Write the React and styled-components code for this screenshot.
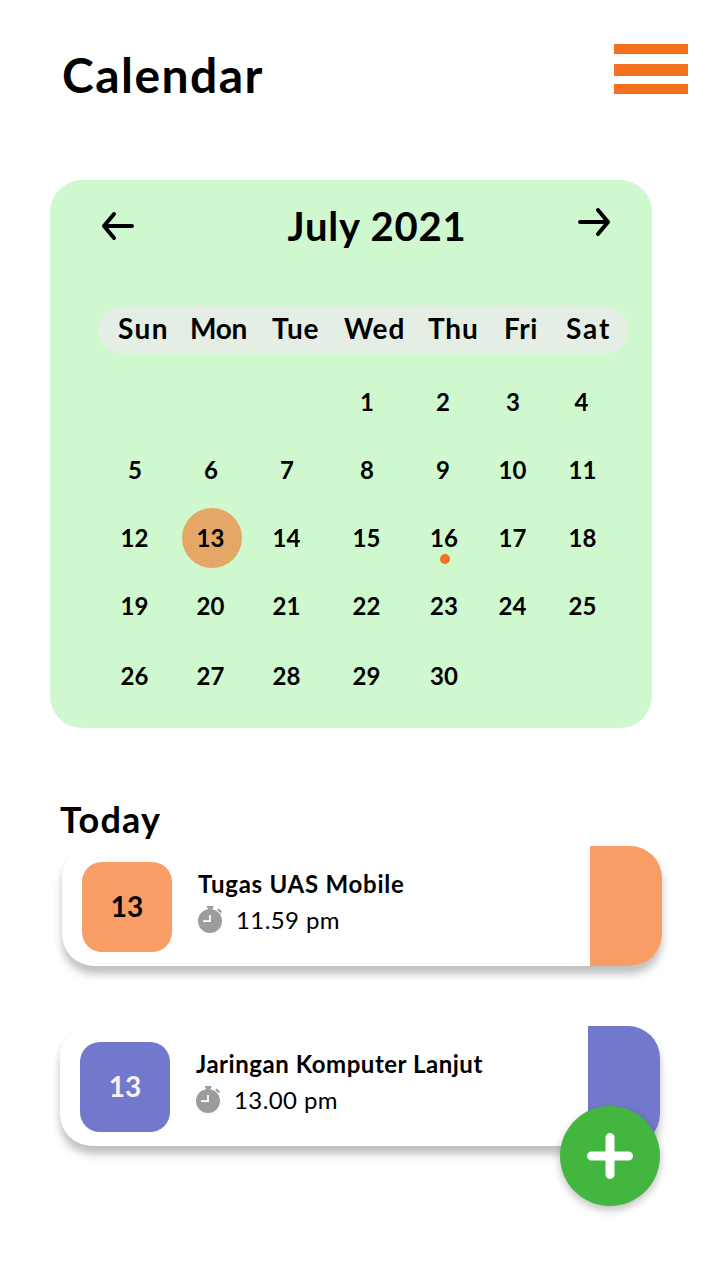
import React from "react";
import styled, { createGlobalStyle } from "styled-components";

const GlobalStyle = createGlobalStyle`
  * { box-sizing: border-box; }
  body { margin: 0; background: #fff; color: #000; font-family: Lato, "Open Sans", sans-serif; }
  h1, h2, h3, p { margin: 0; }
  button { border: 0; padding: 0; background: none; font: inherit; color: inherit; }
`;

const Page = styled.main`
  position: relative;
  width: 720px;
  height: 1280px;
  background: #fff;
  overflow: hidden;
  display: flex;
  flex-direction: column;
`;

const Header = styled.header`
  display: flex;
  justify-content: space-between;
  align-items: flex-start;
  height: 180px;
  padding: 44px 32px 0 62px;
`;

const Title = styled.h1`
  padding-top: 1px;
  font-size: 48px;
  line-height: 60px;
  font-weight: 700;
  letter-spacing: 1.45px;
  white-space: nowrap;
`;

const MenuButton = styled.button`
  display: flex;
  flex-direction: column;
  width: 74px;
`;

const MenuBar = styled.span`
  height: ${(p) => p.$height}px;
  margin-bottom: ${(p) => p.$gap}px;
  background: #f57120;
`;

const CalendarCard = styled.section`
  width: 602px;
  height: 548px;
  margin-left: 50px;
  padding: 0 24px 0 47px;
  border-radius: 32px;
  background: #cff8cf;
`;

const MonthBar = styled.div`
  display: flex;
  justify-content: space-between;
  align-items: flex-start;
  height: 126px;
  padding: 20px 17px 0 4px;
`;

const ArrowButton = styled.button`
  display: flex;
  margin-top: ${(p) => p.$top}px;
`;

const Month = styled.h2`
  margin-left: 42px;
  font-size: 40px;
  line-height: 52px;
  font-weight: 700;
  letter-spacing: 0.8px;
  white-space: nowrap;
`;

const WeekBar = styled.div`
  display: grid;
  grid-template-columns: 72px 82px 72px 84px 76px 62px 62px;
  width: 530px;
  height: 48px;
  margin-left: 1px;
  padding-left: 20px;
  border-radius: 24px;
  background: #e5eee5;
`;

const WeekDay = styled.span`
  font-size: 28px;
  line-height: 44px;
  font-weight: 700;
  letter-spacing: ${(p) => p.$spacing}px;
`;

const Dates = styled.div`
  display: grid;
  grid-template-columns: 76px 76px 76px 84px 70px 68px 72px;
  grid-template-rows: 68px 68px 68px 68px 72px;
  margin-top: 14px;
`;

const DateCell = styled.div`
  position: relative;
  display: flex;
  align-items: center;
  justify-content: center;
  padding-right: ${(p) => p.$shift || 0}px;
  font-size: 24px;
  line-height: 30px;
  font-weight: 700;
`;

const Selected = styled.span`
  display: flex;
  align-items: center;
  justify-content: center;
  flex: none;
  width: 60px;
  height: 60px;
  margin-left: 2px;
  padding-right: 3px;
  border-radius: 50%;
  background: #e4a766;
`;

const EventDot = styled.i`
  position: absolute;
  left: 31px;
  top: 50px;
  width: 10px;
  height: 10px;
  border-radius: 50%;
  background: #f57120;
`;

const Agenda = styled.section`
  padding: 69px 0 0 60px;
`;

const AgendaTitle = styled.h2`
  height: 49px;
  font-size: 36px;
  line-height: 44px;
  font-weight: 700;
  letter-spacing: 1.25px;
`;

const EventCard = styled.article`
  display: flex;
  width: 600px;
  height: 120px;
  margin: 0 0 60px ${(p) => p.$indent}px;
  border-radius: 32px;
  overflow: hidden;
  background: #fff;
  box-shadow: 0 8px 8px rgba(0, 0, 0, 0.25);
`;

const DayBadge = styled.div`
  display: flex;
  align-items: center;
  justify-content: center;
  width: 90px;
  height: 90px;
  margin: 16px 26px 0 20px;
  padding-bottom: 2px;
  border-radius: 20px;
  font-size: 28px;
  font-weight: 700;
  color: ${(p) => p.$ink};
  background: ${(p) => p.$tone};
`;

const EventBody = styled.div`
  flex: 1;
  padding-top: 22px;
  white-space: nowrap;
`;

const EventName = styled.h3`
  font-size: 24px;
  line-height: 32px;
  font-weight: 700;
  letter-spacing: ${(p) => p.$spacing}px;
`;

const EventTime = styled.p`
  display: flex;
  align-items: flex-start;
  gap: 14px;
  margin-top: 4px;
  font-size: 24px;
  line-height: 32px;
  letter-spacing: 0.4px;
  svg { margin-top: 2px; }
`;

const Stripe = styled.div`
  width: 72px;
  background: ${(p) => p.$tone};
`;

const AddButton = styled.button`
  position: absolute;
  left: 560px;
  top: 1106px;
  display: flex;
  align-items: center;
  justify-content: center;
  width: 100px;
  height: 100px;
  border-radius: 50%;
  background: #43b640;
  box-shadow: 0 4px 8px rgba(0, 0, 0, 0.25);
`;

const Arrow = ({ right }) => (
  <svg width="34" height="30" viewBox="0 0 34 30" fill="none" stroke="#000" strokeWidth="4" strokeLinecap="round" strokeLinejoin="round">
    <path d={right ? "M3 15H31M21 3L31 15L21 27" : "M31 15H3M13 3L3 15L13 27"} />
  </svg>
);

const Stopwatch = () => (
  <svg width="24" height="27" viewBox="0 0 24 27">
    <path fill="#9c9c9c" d="M9 0h6.5v1.5L14 3.2H10.5L9 1.5zM19 4l1.8-1.6 3.2 3.2-1.2 1.6z" />
    <circle cx="12" cy="15" r="12" fill="#9c9c9c" />
    <path d="M12 9v6.2H5" fill="none" stroke="#fff" strokeWidth="1.8" />
  </svg>
);

const weekDays = [
  ["Sun", 1.4], ["Mon", -0.3], ["Tue", 0.8], ["Wed", 0.9], ["Thu", 0.8], ["Fri", 0.5], ["Sat", 1.9],
];

const cells = [null, null, null, ...Array.from({ length: 30 }, (_, i) => i + 1)];
const shifts = { 1: 0, 2: 2, 3: 0, 4: 3, 5: -1, 6: 0, 7: 0, 8: 0, 9: 2, 13: 0, 16: 0, 23: 0, 30: 0 };

const events = [
  { day: 13, name: "Tugas UAS Mobile", time: "11.59 pm", tone: "#f89d65", ink: "#000", indent: 2, spacing: 0.75 },
  { day: 13, name: "Jaringan Komputer Lanjut", time: "13.00 pm", tone: "#7279cc", ink: "#f7f1f7", indent: 0, spacing: 0.53 },
];

export default function App() {
  return (
    <Page>
      <GlobalStyle />
      <Header>
        <Title>Calendar</Title>
        <MenuButton aria-label="Menu">
          <MenuBar $height={10} $gap={10} />
          <MenuBar $height={12} $gap={8} />
          <MenuBar $height={10} $gap={0} />
        </MenuButton>
      </Header>
      <CalendarCard>
        <MonthBar>
          <ArrowButton $top={11} aria-label="Previous month"><Arrow /></ArrowButton>
          <Month>July 2021</Month>
          <ArrowButton $top={7} aria-label="Next month"><Arrow right /></ArrowButton>
        </MonthBar>
        <WeekBar>
          {weekDays.map(([d, s]) => <WeekDay key={d} $spacing={s}>{d}</WeekDay>)}
        </WeekBar>
        <Dates>
          {cells.map((d, i) => (
            <DateCell key={i} $shift={shifts[d] ?? 1}>
              {d === 13 ? <Selected>{d}</Selected> : d}
              {d === 16 && <EventDot />}
            </DateCell>
          ))}
        </Dates>
      </CalendarCard>
      <Agenda>
        <AgendaTitle>Today</AgendaTitle>
        {events.map((e) => (
          <EventCard key={e.name} $indent={e.indent}>
            <DayBadge $tone={e.tone} $ink={e.ink}>{e.day}</DayBadge>
            <EventBody>
              <EventName $spacing={e.spacing}>{e.name}</EventName>
              <EventTime><Stopwatch />{e.time}</EventTime>
            </EventBody>
            <Stripe $tone={e.tone} />
          </EventCard>
        ))}
      </Agenda>
      <AddButton aria-label="Add event">
        <svg width="46" height="46" viewBox="0 0 46 46" stroke="#fff" strokeWidth="9" strokeLinecap="round">
          <path d="M23 4.5V41.5M4.5 23H41.5" />
        </svg>
      </AddButton>
    </Page>
  );
}
